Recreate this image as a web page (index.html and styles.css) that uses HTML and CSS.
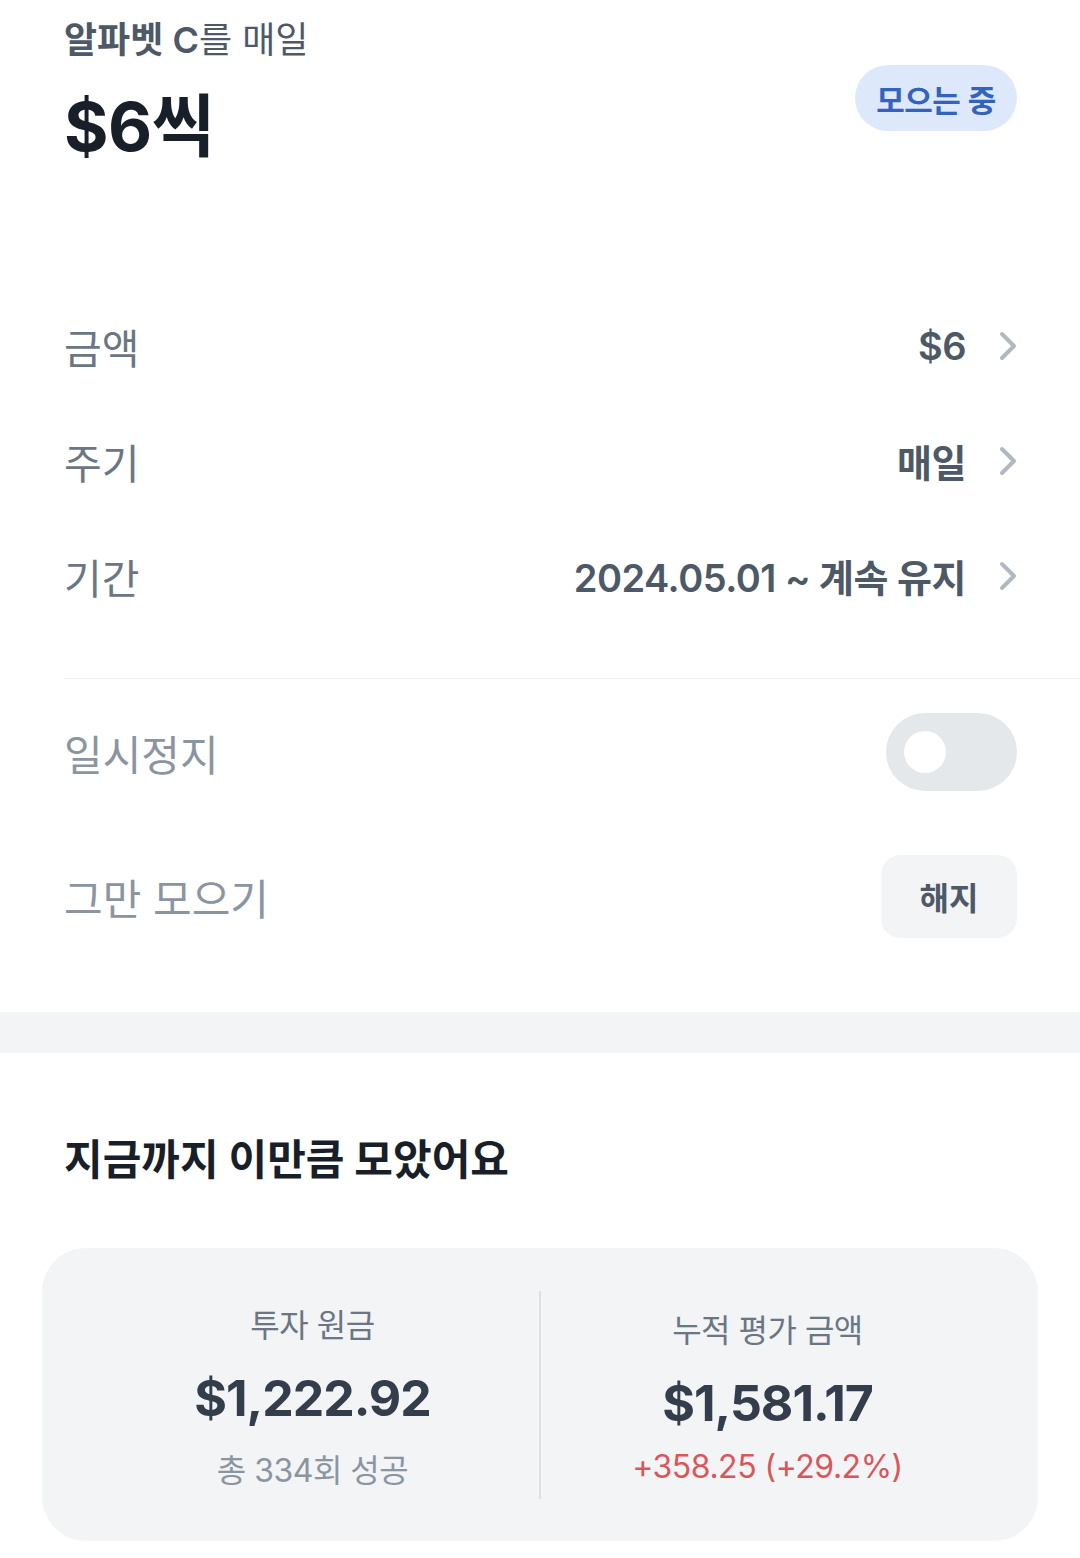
FILE: index.html
```html
<!DOCTYPE html>
<html lang="ko">
<head>
<meta charset="utf-8">
<title>알파벳 C 모으기</title>
<link rel="stylesheet" href="styles.css">
</head>
<body>
<div class="page">
  <header class="header">
    <div class="header-text">
      <div class="title"><span class="title-strong">알파벳 C</span>를 매일</div>
      <div class="amount">$6씩</div>
    </div>
    <div class="badge">모으는 중</div>
  </header>

  <section class="settings">
    <div class="row">
      <span class="row-label">금액</span>
      <span class="row-value">$6<svg class="chev" viewBox="0 0 18 30" width="18" height="30"><path d="M3 3 L15 15 L3 27" fill="none" stroke="#b0b8c1" stroke-width="4" stroke-linecap="round" stroke-linejoin="round"/></svg></span>
    </div>
    <div class="row">
      <span class="row-label">주기</span>
      <span class="row-value">매일<svg class="chev" viewBox="0 0 18 30" width="18" height="30"><path d="M3 3 L15 15 L3 27" fill="none" stroke="#b0b8c1" stroke-width="4" stroke-linecap="round" stroke-linejoin="round"/></svg></span>
    </div>
    <div class="row">
      <span class="row-label">기간</span>
      <span class="row-value">2024.05.01 ~ 계속 유지<svg class="chev" viewBox="0 0 18 30" width="18" height="30"><path d="M3 3 L15 15 L3 27" fill="none" stroke="#b0b8c1" stroke-width="4" stroke-linecap="round" stroke-linejoin="round"/></svg></span>
    </div>
  </section>

  <hr class="divider">

  <section class="controls">
    <div class="control-row control-row-first">
      <span class="control-label">일시정지</span>
      <span class="toggle"><span class="knob"></span></span>
    </div>
    <div class="control-row control-row-second">
      <span class="control-label">그만 모으기</span>
      <span class="cancel-btn">해지</span>
    </div>
  </section>

  <div class="band"></div>

  <section class="summary">
    <h2 class="summary-title">지금까지 이만큼 모았어요</h2>
    <div class="card">
      <div class="col col-left">
        <div class="col-label">투자 원금</div>
        <div class="col-amount">$1,222.92</div>
        <div class="col-sub">총 334회 성공</div>
      </div>
      <div class="vline"></div>
      <div class="col col-right">
        <div class="col-label">누적 평가 금액</div>
        <div class="col-amount">$1,581.17</div>
        <div class="col-sub col-sub-red">+358.25 (+29.2%)</div>
      </div>
    </div>
  </section>
</div>
</body>
</html>
```

FILE: styles.css
```css
* { box-sizing: border-box; }
html, body {
  margin: 0;
  padding: 0;
  background: #ffffff;
}
body {
  font-family: Inter, "Noto Sans CJK KR", "Noto Sans", sans-serif;
  color: #191f28;
  width: 1080px;
  height: 1558px;
  overflow: hidden;
}
.page { width: 1080px; }

.header {
  display: flex;
  justify-content: space-between;
  align-items: flex-start;
  padding: 18px 63px 0 64px;
}
.title {
  font-size: 36px;
  line-height: 44px;
  color: #4e5968;
  font-weight: 400;
  letter-spacing: 0;
}
.title-strong { font-weight: 600; }
.amount {
  margin-top: 22px;
  font-size: 68px;
  line-height: 84px;
  font-weight: 700;
  letter-spacing: -0.5px;
  color: #191f28;
}
.badge {
  margin-top: 47px;
  width: 162px;
  height: 66px;
  border-radius: 33px;
  background: #dde9fb;
  color: #3462bf;
  font-size: 31px;
  font-weight: 600;
  display: flex;
  align-items: center;
  justify-content: center;
  letter-spacing: -0.5px;
}

.settings {
  margin-top: 120px;
  padding: 0 63px 0 64px;
}
.row {
  height: 115px;
  display: flex;
  align-items: center;
  justify-content: space-between;
}
.row-label {
  font-size: 41px;
  color: #6b7684;
  letter-spacing: 0;
}
.row-value {
  display: flex;
  align-items: center;
  font-size: 38px;
  font-weight: 600;
  color: #4e5968;
  letter-spacing: -0.5px;
}
.chev {
  margin-left: 33px;
  display: block;
}

.divider {
  margin: 45px 0 0 64px;
  border: 0;
  height: 1px;
  background: #eceef1;
}

.controls {
  padding: 0 63px 0 64px;
}
.control-row {
  display: flex;
  align-items: center;
  justify-content: space-between;
}
.control-row-first { height: 146px; }
.control-row-second { height: 142px; }
.control-label {
  font-size: 42px;
  color: #8b95a1;
  letter-spacing: 0;
}
.toggle {
  width: 131px;
  height: 78px;
  border-radius: 39px;
  background: #e5e8eb;
  display: flex;
  align-items: center;
  padding-left: 18px;
}
.knob {
  width: 42px;
  height: 42px;
  border-radius: 50%;
  background: #ffffff;
}
.cancel-btn {
  width: 136px;
  height: 83px;
  border-radius: 20px;
  background: #f2f4f6;
  color: #4e5968;
  font-size: 32px;
  font-weight: 600;
  display: flex;
  align-items: center;
  justify-content: center;
}

.band {
  margin-top: 45px;
  height: 41px;
  background: #f2f4f6;
}

.summary {
  padding: 0 42px;
}
.summary-title {
  margin: 79px 0 0 22px;
  font-size: 42px;
  line-height: 56px;
  font-weight: 700;
  color: #191f28;
  letter-spacing: 0;
}
.card {
  margin-top: 60px;
  height: 293px;
  border-radius: 44px;
  background: #f2f4f6;
  display: flex;
  padding: 43px 44px 42px;
}
.vline {
  width: 2px;
  background: #dcdfe3;
}
.col {
  flex: 1;
  display: flex;
  flex-direction: column;
  align-items: center;
}
.col-left { padding-top: 13px; }
.col-right { padding-top: 18px; }
.col-label {
  font-size: 32px;
  line-height: 44px;
  color: #6b7684;
  letter-spacing: -0.5px;
}
.col-amount {
  margin-top: 18px;
  font-size: 50px;
  line-height: 64px;
  font-weight: 700;
  color: #333d4b;
  letter-spacing: -1px;
}
.col-sub {
  margin-top: 19px;
  font-size: 32px;
  line-height: 44px;
  color: #8b95a1;
  letter-spacing: -0.5px;
}
.col-sub-red {
  margin-top: 10px;
  color: #d9575a;
}
```
